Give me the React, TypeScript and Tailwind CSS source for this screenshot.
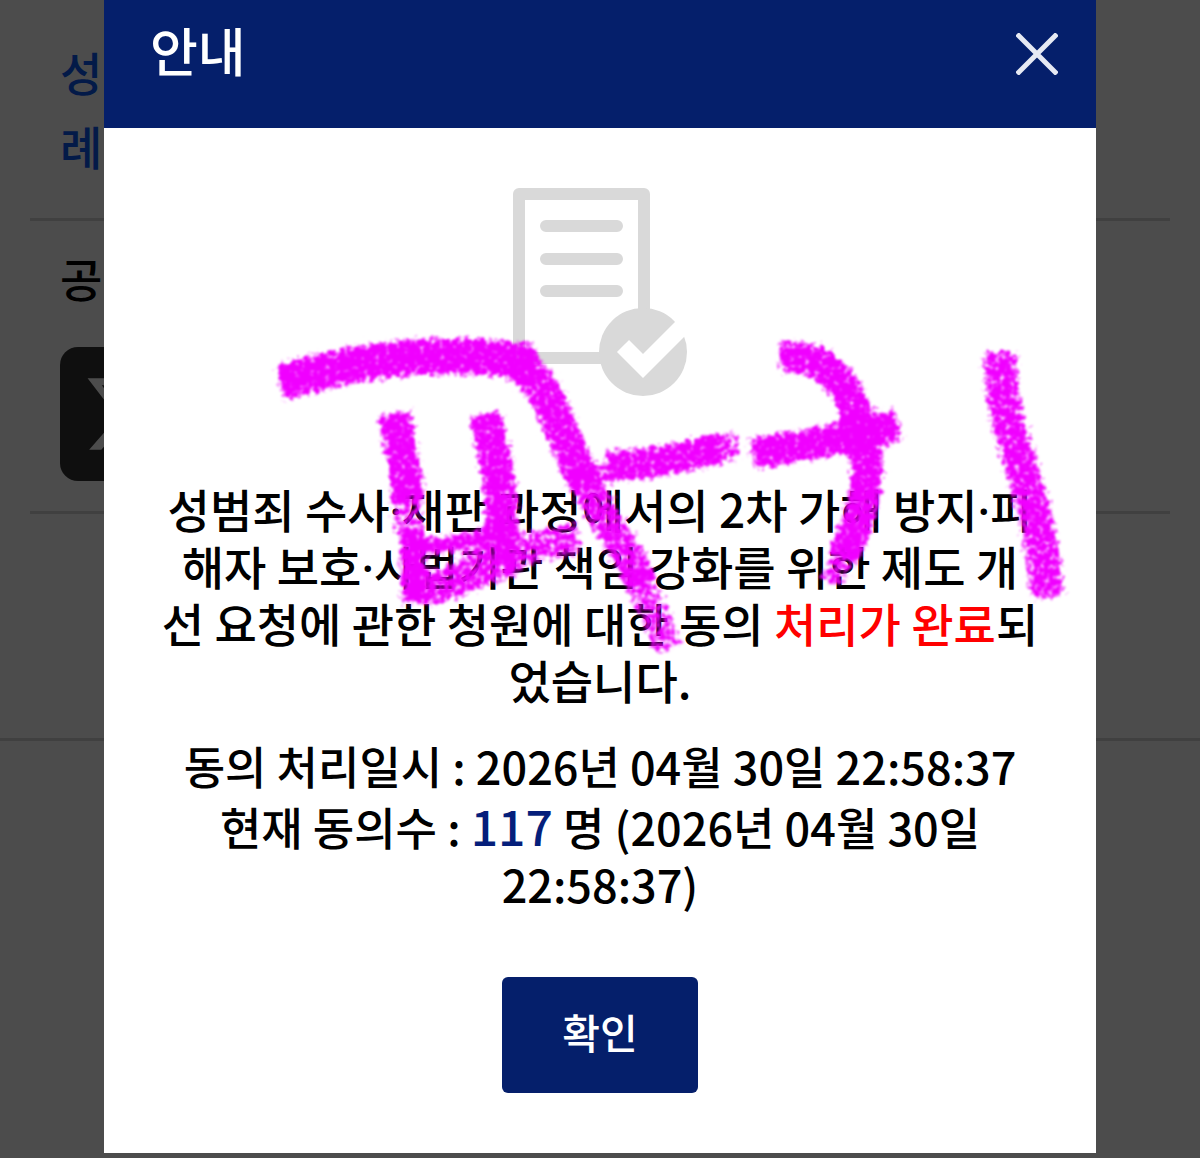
import React, { useState } from 'react';
import { FaXTwitter } from 'react-icons/fa6';

const brushStrokes = [
  { d: 'M278 383 C330 369 370 359 420 357 S500 357 534 363', width: 39, opacity: 0.9 },
  { d: 'M512 360 C550 378 562 440 586 484', width: 37, opacity: 0.86 },
  { d: 'M578 468 C595 508 625 545 642 584', width: 36, opacity: 0.78 },
  { d: 'M636 572 C647 602 660 622 669 652', width: 34, opacity: 0.68 },
  { d: 'M394 411 C400 450 407 470 408 500', width: 36, opacity: 0.88 },
  { d: 'M407 490 C408 508 407 520 407 534', width: 35, opacity: 0.64 },
  { d: 'M412 530 C411 550 412 575 414 604', width: 26, opacity: 0.95 },
  { d: 'M484 412 C494 450 504 490 501 536', width: 36, opacity: 0.88 },
  { d: 'M504 528 C480 543 455 543 424 547', width: 20, opacity: 0.88 },
  { d: 'M418 588 C450 588 480 568 517 556', width: 38, opacity: 0.78 },
  { d: 'M503 556 C530 546 555 542 582 538', width: 36, opacity: 0.72 },
  { d: 'M603 465 C650 469 690 452 720 449', width: 34, opacity: 0.86 },
  { d: 'M708 451 L741 444', width: 32, opacity: 0.68 },
  { d: 'M751 454 C800 446 850 438 900 424', width: 35, opacity: 0.9 },
  { d: 'M778 358 C820 352 846 376 860 424 S866 505 844 556', width: 35, opacity: 0.88 },
  { d: 'M848 545 C842 560 836 570 829 586', width: 27, opacity: 0.72 },
  { d: 'M1000 350 C1000 410 1014 440 1025 478 S1042 540 1048 599', width: 37, opacity: 0.82 },
];

function DocumentCheckIcon() {
  return (
    <svg viewBox="0 0 174 209" className="block w-[174px] h-[209px]" aria-hidden="true">
      <rect x="6" y="6" width="125" height="164" fill="none" stroke="#d9d9d9" strokeWidth="12" strokeLinejoin="round" />
      <path d="M33 38H104M33 71H104M33 103H104" stroke="#d9d9d9" strokeWidth="12" strokeLinecap="round" />
      <circle cx="130" cy="164" r="44" fill="#d9d9d9" />
      <path d="M110 158L130 178L170 138" fill="none" stroke="#fff" strokeWidth="17" />
    </svg>
  );
}

function BrushDrawing() {
  return (
    <svg
      viewBox="260 320 820 350"
      className="absolute left-[156px] top-[320px] w-[820px] h-[350px] pointer-events-none"
      aria-hidden="true"
    >
      <defs>
        <filter id="crayon" filterUnits="userSpaceOnUse" x="260" y="320" width="820" height="350" colorInterpolationFilters="sRGB">
          <feGaussianBlur in="SourceAlpha" stdDeviation="4" result="soft" />
          <feTurbulence type="fractalNoise" baseFrequency="0.2" numOctaves="3" seed="7" />
          <feColorMatrix values="0 0 0 0 0  0 0 0 0 0  0 0 0 0 0  0 0 0 1 0" result="grain" />
          <feComposite in="soft" in2="grain" operator="arithmetic" k1="0" k2="1.6" k3="1.6" k4="-1.3" />
          <feComponentTransfer>
            <feFuncA type="linear" slope="1.8" intercept="-0.35" />
          </feComponentTransfer>
          <feGaussianBlur stdDeviation="1" result="mask" />
          <feFlood floodColor="#f000ff" />
          <feComposite in2="mask" operator="in" />
        </filter>
      </defs>
      <g filter="url(#crayon)" fill="none" stroke="#f000ff">
        {brushStrokes.map(stroke => (
          <path key={stroke.d} d={stroke.d} strokeWidth={stroke.width} opacity={stroke.opacity} />
        ))}
      </g>
    </svg>
  );
}

// The Korean font sets the middle dot full width, the Latin one keeps it narrow
function Dot() {
  return <span className="font-['Noto_Sans',sans-serif] leading-none">·</span>;
}

function PetitionPage() {
  return (
    <main className="min-h-screen bg-white">
      <div className="mx-[30px] px-[30px] pt-[34px] pb-9 border-b-3 border-[#d5d5d5]">
        <a href="#petition" className="block text-[46px] leading-[74px] text-[#0a58f0]">
          성범
          <br />
          례
        </a>
      </div>
      <div className="mx-[30px] px-[30px] pt-[26px] pb-[30px] border-b-3 border-[#d5d5d5]">
        <p className="text-[46px] leading-[60px] text-black mb-10">공</p>
        <a
          href="#share"
          aria-label="X"
          className="flex items-center justify-center w-[134px] h-[134px] rounded-[18px] bg-[#333] text-white"
        >
          <FaXTwitter className="w-[88px] h-[88px]" />
        </a>
      </div>
      <div className="h-[227px] border-b-3 border-[#d5d5d5]" />
    </main>
  );
}

export default function App() {
  const [isOpen, setIsOpen] = useState(true);

  return (
    <div className="font-['Noto_Sans_CJK_KR',sans-serif] font-medium">
      <PetitionPage />

      {isOpen && (
        <div className="absolute inset-0 bg-black/70 px-[104px]">
          <div role="dialog" aria-modal="true" aria-labelledby="notice-title" className="relative bg-white">
            <header className="flex items-start justify-between h-32 px-[46px] bg-[#051f6b] text-white">
              <h1 id="notice-title" className="text-[52px] leading-[100px]">안내</h1>
              <button
                type="button"
                aria-label="닫기"
                onClick={() => setIsOpen(false)}
                className="flex items-center h-[108px] -mr-2"
              >
                <svg viewBox="0 0 42 42" className="w-[42px] h-[42px]" aria-hidden="true">
                  <path d="M1 1L41 41M41 1L1 41" stroke="#e6e9f3" strokeWidth="5" />
                </svg>
              </button>
            </header>

            <div className="flex flex-col items-center px-[52px] py-[60px] text-center leading-[57px] text-black">
              <DocumentCheckIcon />

              <p className="mt-[83px] text-[46px]">
                성범죄 수사<Dot />재판 과정에서의 2차 가해 방지<Dot />피
                <br />
                해자 보호<Dot />사법기관 책임 강화를 위한 제도 개
                <br />
                선 요청에 관한 청원에 대한 동의 <span className="text-[#ff0000]">처리가 완료</span>되
                <br />
                었습니다.
              </p>

              <p className="mt-[29px] text-[45px]">동의 처리일시 : 2026년 04월 30일 22:58:37</p>
              <p className="mt-1 text-[45px]">
                현재 동의수 : <strong className="font-medium text-[48px] leading-none text-[#051f7b]">117</strong> 명 (2026년 04월 30일
                <br />
                22:58:37)
              </p>

              <button
                type="button"
                onClick={() => setIsOpen(false)}
                className="mt-[65px] h-[116px] px-[60px] pb-2 rounded-md bg-[#051f6b] text-[41px] text-white"
              >
                확인
              </button>
            </div>

            <BrushDrawing />
          </div>
        </div>
      )}
    </div>
  );
}
